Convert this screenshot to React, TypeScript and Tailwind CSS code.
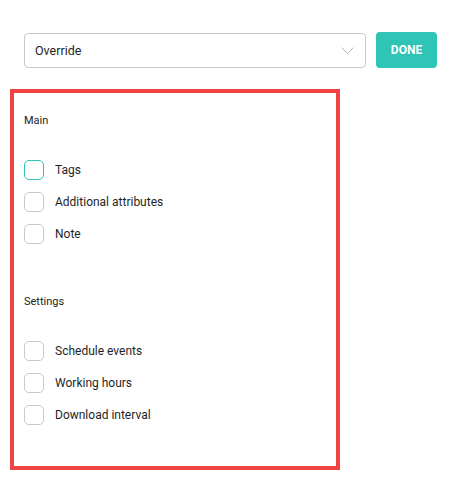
import React from "react";

const Checkbox = ({ active }: { active?: boolean }) => (
  <span
    className={
      "block w-[20px] h-[20px] rounded-[5px] border bg-white shrink-0 " +
      (active ? "border-[#2ec4b6]" : "border-[#c4cac9]")
    }
  />
);

const Row = ({ label, active }: { label: string; active?: boolean }) => (
  <div className="flex items-center h-[20px]">
    <Checkbox active={active} />
    <span className="ml-[11px] text-[12px] leading-[20px] text-[#1f1f1f]">{label}</span>
  </div>
);

export default function App() {
  return (
    <div
      className="w-[460px] h-[500px] bg-white pt-[32px] pl-[24px]"
      style={{ fontFamily: "Roboto, 'Liberation Sans', sans-serif" }}
    >
      <div className="flex items-start gap-[10px]">
        <div className="mt-[1px] w-[342px] h-[35px] rounded-[4px] border border-[#c5cbca] flex items-center justify-between pl-[10px] pr-[11px] pt-[1px]">
          <span className="text-[12.5px] text-[#1f1f1f]">Override</span>
          <svg width="13" height="8" viewBox="0 0 13 8" fill="none">
            <path d="M0.5 0.5 L6.5 6.5 L12.5 0.5" stroke="#b5b9b9" strokeWidth="1" />
          </svg>
        </div>
        <button className="w-[61px] h-[36px] rounded-[4px] bg-[#2ec4b6] text-white text-[12px] font-bold flex items-center justify-center">
          DONE
        </button>
      </div>

      <div className="ml-[-14px] mt-[21px] w-[330px] h-[381px] border-4 border-[#ef4444] pl-[10px] pt-[20px]">
        <div className="text-[11px] leading-[16px] text-[#222]">Main</div>
        <div className="mt-[31px] flex flex-col gap-[12px]">
          <Row label="Tags" active />
          <Row label="Additional attributes" />
          <Row label="Note" />
        </div>
        <div className="mt-[50px] text-[11px] leading-[16px] text-[#222]">Settings</div>
        <div className="mt-[31px] flex flex-col gap-[12px]">
          <Row label="Schedule events" />
          <Row label="Working hours" />
          <Row label="Download interval" />
        </div>
      </div>
    </div>
  );
}
